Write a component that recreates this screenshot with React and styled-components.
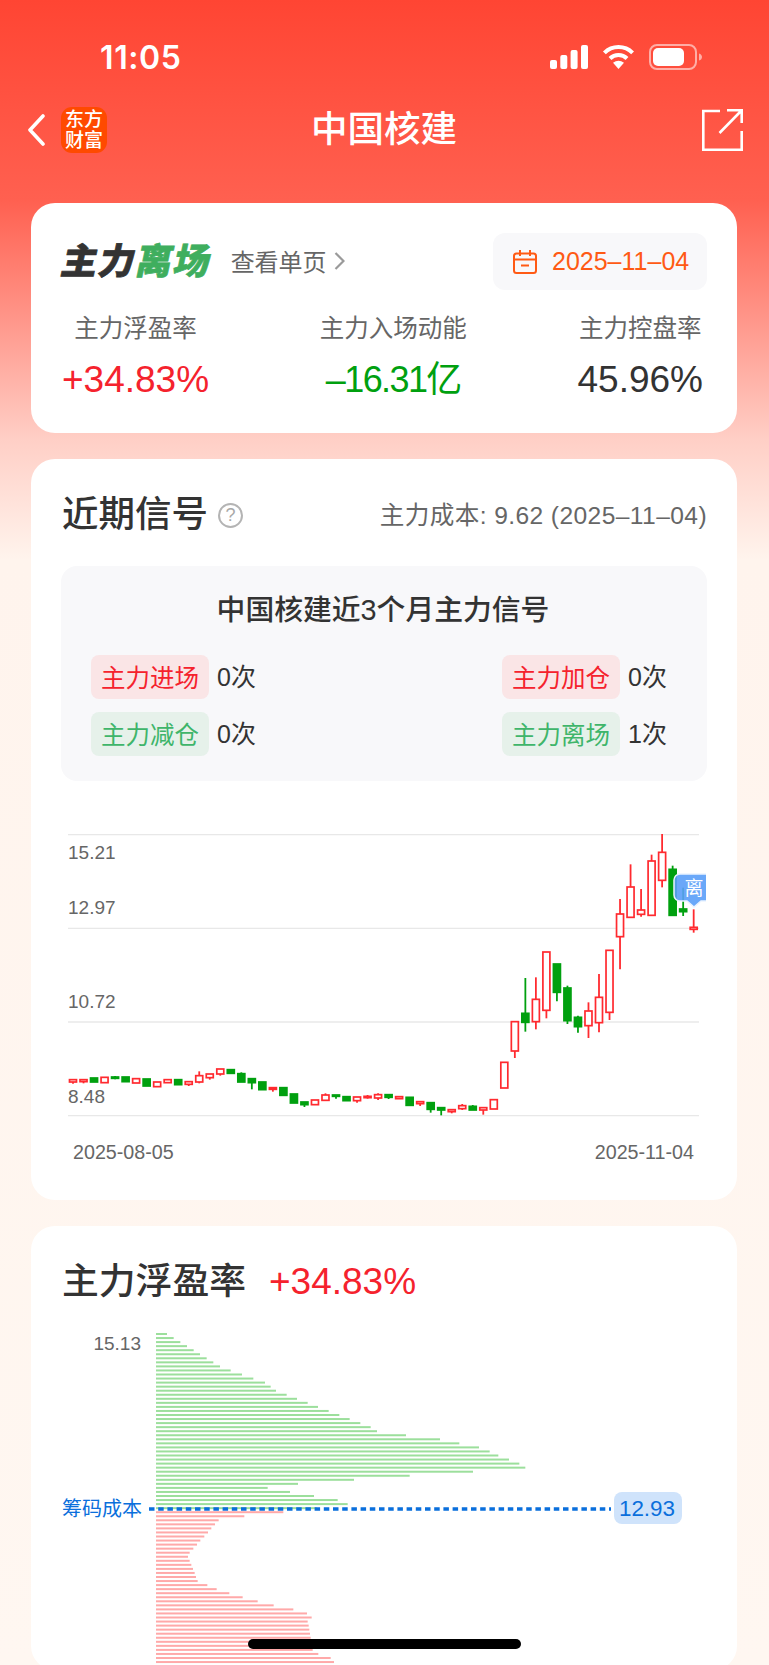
import React from "react";
import styled, { createGlobalStyle } from "styled-components";

const FONT = `"Liberation Sans", "Noto Sans CJK SC", sans-serif`;
const RED = "#f5222d";
const GREEN = "#00a00f";
const UP = "#ff2a2f";
const BLUE = "#0a6fdc";

const GlobalStyle = createGlobalStyle`
  html, body {
    margin: 0;
    padding: 0;
    background: #fff7f1;
  }
  * {
    box-sizing: border-box;
  }
`;

const Page = styled.div`
  position: relative;
  width: 769px;
  height: 1665px;
  overflow: hidden;
  font-family: ${FONT};
  background: linear-gradient(
    180deg,
    #ff4533 0,
    #ff6050 200px,
    #ff8d80 300px,
    #ffcfc6 440px,
    #fff4ed 560px,
    #fff7f1 100%
  );
`;

const StatusBar = styled.div`
  display: flex;
  align-items: center;
  justify-content: space-between;
  height: 58px;
  padding: 28px 66px 0 100px;
  box-sizing: content-box;
  color: #fff;
`;

const Time = styled.span`
  font-family: Inter, sans-serif;
  font-size: 32px;
  font-weight: 600;
  letter-spacing: 0.6px;
`;

const StatusIcons = styled.div`
  display: flex;
  align-items: center;
  gap: 14px;
`;

const NavBar = styled.div`
  position: relative;
  display: flex;
  align-items: center;
  justify-content: space-between;
  height: 60px;
  margin-top: 14px;
  padding: 0 26px 0 28px;
`;

const NavLeft = styled.div`
  display: flex;
  align-items: center;
  gap: 16px;
`;

const AppLogo = styled.div`
  width: 46px;
  height: 46px;
  padding-top: 2px;
  border-radius: 11px;
  background: #ff4a00;
  color: #fff;
  font-size: 19px;
  font-weight: 500;
  line-height: 21px;
  text-align: center;
`;

const NavTitle = styled.div`
  position: absolute;
  left: 0;
  right: 0;
  top: 7px;
  padding-right: 1px;
  text-align: center;
  color: #fff;
  font-size: 36.5px;
  font-weight: 500;
  line-height: 46px;
  pointer-events: none;
`;

const Cards = styled.div`
  display: flex;
  flex-direction: column;
  gap: 26px;
  width: 706px;
  margin: 43px 0 0 31px;
`;

const Card = styled.section`
  background: #fff;
  border-radius: 24px;
  padding: ${(p) => p.$padding || "30px 31px 0"};
`;

const SummaryTop = styled.div`
  display: flex;
  align-items: center;
  justify-content: space-between;
  height: 57px;
`;

const SummaryTitle = styled.div`
  display: flex;
  align-items: center;
  gap: 19px;
`;

const SignalName = styled.div`
  display: inline-block;
  transform: skewX(-12deg);
  font-size: 36px;
  font-weight: 900;
  line-height: 44px;
  letter-spacing: 1.4px;
  color: #333;
  -webkit-text-stroke: 0.7px currentColor;
`;

const SignalAccent = styled.span`
  color: #3fae5e;
`;

const SinglePage = styled.div`
  display: flex;
  align-items: center;
  gap: 7px;
  margin-top: -2px;
  font-size: 24px;
  color: #666;
`;

const DateButton = styled.div`
  display: flex;
  align-items: center;
  gap: 15px;
  width: 214px;
  height: 57px;
  margin-right: -1px;
  padding-left: 20px;
  border-radius: 12px;
  background: #f8f8fa;
  color: #ff5a14;
  font-size: 25px;
`;

const Stats = styled.div`
  display: flex;
  justify-content: space-between;
  margin: 24px 3px 0 0;
  padding-bottom: 31px;
`;

const Stat = styled.div`
  display: flex;
  flex-direction: column;
  align-items: center;
`;

const StatLabel = styled.div`
  color: #666;
  font-size: 24.5px;
  line-height: 30px;
`;

const StatValue = styled.div`
  margin-top: 14px;
  color: ${(p) => p.$color};
  font-size: ${(p) => p.$size || 37}px;
  letter-spacing: ${(p) => p.$tracking || 0}px;
  line-height: 44px;
`;

const SectionHeader = styled.div`
  display: flex;
  align-items: center;
  justify-content: space-between;
  height: 52px;
`;

const SectionLeft = styled.div`
  display: flex;
  align-items: center;
  gap: 10px;
`;

const SectionTitle = styled.h2`
  margin: 0;
  color: #333;
  font-size: 36.5px;
  font-weight: 500;
  line-height: 50px;
`;

const HelpIcon = styled.span`
  display: flex;
  align-items: center;
  justify-content: center;
  width: 25px;
  height: 25px;
  border: 2px solid #b4b4b4;
  border-radius: 50%;
  color: #a8a8a8;
  font-size: 18px;
`;

const CostNote = styled.div`
  margin: 0 -1px 5px 0;
  color: #666;
  font-size: 24.6px;
  letter-spacing: 0.4px;
  white-space: nowrap;
`;

const SignalBox = styled.div`
  margin: 25px -1px 0 -1px;
  padding: 26px 30px 25px;
  border-radius: 16px;
  background: #f8f8fa;
`;

const SignalHeading = styled.div`
  margin-left: -2px;
  color: #333;
  font-size: 28.8px;
  font-weight: 500;
  line-height: 36px;
  text-align: center;
`;

const SignalGrid = styled.div`
  display: grid;
  grid-template-columns: 411px auto;
  row-gap: 13px;
  margin-top: 27px;
`;

const SignalItem = styled.div`
  display: flex;
  align-items: center;
  gap: 8px;
  color: #333;
  font-size: 25px;
`;

const SignalTag = styled.span`
  width: 118px;
  height: 44px;
  border-radius: 8px;
  background: ${(p) => (p.$up ? "#fae5e6" : "#e6f1ea")};
  color: ${(p) => (p.$up ? RED : "#3fb56a")};
  font-size: 24.5px;
  line-height: 47px;
  text-align: center;
`;

const SignalCount = styled.span`
  margin-top: -4px;
`;

const ChartWrap = styled.div`
  margin: 0 -31px;
  padding-bottom: 20px;
`;

const ChartSvg = styled.svg`
  display: block;
  width: 706px;
  margin-top: ${(p) => p.$top}px;
`;

const AxisText = styled.text`
  font-family: ${FONT};
  font-size: ${(p) => p.$size || 19}px;
  fill: ${(p) => p.$fill || "#666"};
`;

const ProfitHeader = styled.div`
  display: flex;
  align-items: center;
  gap: 23px;
  margin-left: 31px;
`;

const ProfitTitle = styled(SectionTitle)`
  font-size: 36.8px;
`;

const ProfitValue = styled.span`
  color: ${RED};
  font-size: 37px;
`;

const HomeIndicator = styled.div`
  position: absolute;
  left: 248px;
  top: 1639px;
  width: 273px;
  height: 10px;
  border-radius: 5px;
  background: #000;
`;

// [up, bodyTop, bodyBottom, wickTop, wickBottom], in thirds of a pixel below the chart top
const CANDLES = [
  [1, 779, 786, 779, 791], [1, 779, 785, 779, 790], [0, 774, 786], [1, 772, 788],
  [0, 771, 775, 768, 778], [0, 771, 785], [1, 776, 789], [0, 777, 798],
  [1, 786, 800], [1, 779, 788], [0, 779, 794], [1, 785, 793, 785, 798],
  [1, 767, 786, 754, 790], [1, 762, 773, 762, 779], [1, 747, 762, 747, 767], [0, 749, 760],
  [0, 761, 786, 757, 786], [0, 776, 788, 776, 808], [0, 786, 809], [1, 803, 808, 803, 815],
  [0, 803, 826], [0, 822, 849], [0, 846, 854, 846, 861], [1, 840, 854],
  [1, 825, 841, 820, 841], [0, 825, 829, 825, 836], [0, 830, 842], [1, 831, 842, 831, 848],
  [1, 829, 833, 825, 836], [1, 824, 834, 820, 840], [0, 824, 832, 824, 837], [1, 830, 836],
  [0, 832, 856], [1, 845, 851, 845, 858], [0, 848, 868, 848, 878], [0, 863, 870, 863, 886],
  [1, 869, 875, 869, 880], [1, 857, 866, 852, 870], [0, 859, 870, 855, 870], [1, 863, 870, 863, 884],
  [1, 839, 867], [1, 727, 804], [1, 605, 693, 605, 714], [0, 580, 607, 474, 635],
  [1, 538, 605, 472, 628], [1, 396, 571, 396, 595], [0, 432, 517, 432, 544], [0, 504, 602, 497, 612],
  [0, 592, 620, 587, 638], [1, 573, 617, 547, 654], [1, 532, 608, 462, 637], [1, 391, 577, 391, 600],
  [1, 282, 350, 237, 448], [1, 201, 292, 133, 292], [1, 270, 283, 207, 290], [1, 123, 286, 104, 286],
  [1, 97, 181, 42, 202], [0, 148, 286, 137, 286], [0, 267, 275, 203, 288], [1, 322, 328, 268, 338],
];

const GREEN_BARS = [
  351, 371, 391, 411, 431, 450, 470, 490, 510, 542, 576, 610, 645, 662, 678, 710, 741, 773, 804, 836, 868, 899,
  931, 962, 981, 1068, 1170, 1228, 1287, 1319, 1345, 1377, 1408, 1426, 1269, 1079, 912, 744, 653, 720, 792, 863,
  893, 800,
];

const RED_BARS = [
  700, 583, 506, 495, 484, 474, 463, 451, 441, 430, 419, 414, 419, 424, 429, 434, 438, 443, 472, 500, 538, 578, 623,
  671, 730, 771, 785, 773, 776, 778, 780, 782, 784, 786, 788, 805, 842, 852,
];

const GRID_LINES = [834.7, 928.3, 1022, 1115.7];

const Candle = ({ data, index }) => {
  const [up, bodyTop, bodyBottom, wickTop = bodyTop, wickBottom = bodyBottom] = data;
  const x = 73 + index * 10.52;
  const color = up ? UP : GREEN;
  const top = 820 + bodyTop / 3;
  const height = (bodyBottom - bodyTop) / 3;
  return (
    <g>
      <line x1={x} x2={x} y1={820 + wickTop / 3} y2={820 + wickBottom / 3} stroke={color} strokeWidth="1.8" />
      <rect
        x={x - 3.5}
        y={top}
        width="7"
        height={height}
        fill={up ? "#fff" : color}
        stroke={color}
        strokeWidth="1.7"
      />
    </g>
  );
};

const KLineChart = () => (
  <ChartSvg $top={39} viewBox="31 820 706 360" height="360">
    {GRID_LINES.map((y) => (
      <line key={y} x1="68" x2="699" y1={y} y2={y} stroke="#e8e8e8" strokeWidth="1.3" />
    ))}
    <AxisText x="68" y="859">15.21</AxisText>
    <AxisText x="68" y="914">12.97</AxisText>
    <AxisText x="68" y="1008">10.72</AxisText>
    <AxisText x="68" y="1103">8.48</AxisText>
    <AxisText x="73" y="1159" $size={19.7}>2025-08-05</AxisText>
    <AxisText x="694" y="1159" textAnchor="end" $size={19.7}>2025-11-04</AxisText>
    {CANDLES.map((c, i) => (
      <Candle key={i} data={c} index={i} />
    ))}
    <path
      d="M706 874H680a6 6 0 0 0-6 6v15a6 6 0 0 0 6 6h7l7 6 7-6h5"
      fill="#5a9ff8"
      fillOpacity="0.9"
      stroke="#eaf3ff"
      strokeWidth="1.5"
    />
    <AxisText x="694" y="895" textAnchor="middle" $size={19} $fill="#fff">离</AxisText>
  </ChartSvg>
);

const DistributionChart = () => (
  <ChartSvg $top={13} viewBox="31 1320 706 350" height="350">
    {GREEN_BARS.map((end, i) => (
      <rect key={i} x="156" y={1333 + i * 4.05} width={(end - 318) / 3} height="2" fill="#9cdf9c" />
    ))}
    {RED_BARS.map((end, i) => (
      <rect key={i} x="156" y={1511.2 + i * 4.05} width={(end - 318) / 3} height="2" fill="#ffa9a9" />
    ))}
    <AxisText x="141" y="1350" textAnchor="end">15.13</AxisText>
    <AxisText x="62" y="1516" $size={20} $fill={BLUE}>筹码成本</AxisText>
    <line x1="149" x2="611" y1="1509" y2="1509" stroke={BLUE} strokeWidth="3.3" strokeDasharray="5.5 3.7" />
    <rect x="614" y="1492" width="68" height="32" rx="8" fill="#cfe3fb" />
    <AxisText x="647" y="1516" textAnchor="middle" $size={22.4} $fill={BLUE}>12.93</AxisText>
  </ChartSvg>
);

const SignalIcon = () => (
  <svg width="38" height="24" viewBox="0 0 38 24" fill="#fff">
    <rect x="0" y="15" width="7" height="9" rx="2" />
    <rect x="10.3" y="10" width="7" height="14" rx="2" />
    <rect x="20.6" y="5" width="7" height="19" rx="2" />
    <rect x="31" y="0" width="7" height="24" rx="2" />
  </svg>
);

const WifiIcon = () => (
  <svg width="33" height="24" viewBox="0 0 33 24" fill="none" stroke="#fff">
    <path d="M2.4 7.9a20 20 0 0 1 28.2 0" strokeWidth="4" />
    <path d="M8 13.5a12 12 0 0 1 17 0" strokeWidth="4" />
    <path d="M16.5 24L11 17.8Q16.5 13.5 22 17.8Z" fill="#fff" stroke="none" />
  </svg>
);

const BatteryIcon = () => (
  <svg width="54" height="26" viewBox="0 0 54 26" fill="none">
    <rect x="1" y="1" width="46" height="24" rx="7" stroke="#fff" strokeOpacity="0.55" strokeWidth="2" />
    <rect x="4" y="4" width="31" height="18" rx="5" fill="#fff" />
    <path d="M50 9.5c2 .5 3 2 3 3.5s-1 3-3 3.5z" fill="#fff" fillOpacity="0.55" />
  </svg>
);

const BackIcon = () => (
  <svg width="17" height="32" viewBox="0 0 17 32" fill="none" stroke="#fff" strokeWidth="3.6" strokeLinecap="round" strokeLinejoin="round">
    <path d="M15 2L2 16l13 14" />
  </svg>
);

const ShareIcon = () => (
  <svg width="41" height="42" viewBox="0 0 41 42" fill="none" stroke="#fff" strokeWidth="2.6">
    <path d="M18 2H1.3v38.7h38.4V22" />
    <path d="M17.5 24L39.5 1.5M25 1.3h14.7V14" />
  </svg>
);

const CalendarIcon = () => (
  <svg width="24" height="24" viewBox="0 0 24 24" fill="none" stroke="#ff5a14" strokeWidth="2">
    <rect x="1" y="3.5" width="22" height="19.5" rx="2.5" />
    <path d="M7 0v6M17 0v6M1 9.5h22M8 15.5h8" />
  </svg>
);

const ChevronIcon = () => (
  <svg width="11" height="18" viewBox="0 0 11 18" fill="none" stroke="#9a9a9a" strokeWidth="2.2">
    <path d="M1.5 1l8 8-8 8" />
  </svg>
);

const SIGNALS = [
  { label: "主力进场", count: "0次", up: true },
  { label: "主力加仓", count: "0次", up: true },
  { label: "主力减仓", count: "0次", up: false },
  { label: "主力离场", count: "1次", up: false },
];

const App = () => (
  <Page>
    <GlobalStyle />
    <StatusBar>
      <Time>11:05</Time>
      <StatusIcons>
        <SignalIcon />
        <WifiIcon />
        <BatteryIcon />
      </StatusIcons>
    </StatusBar>
    <NavBar>
      <NavLeft>
        <BackIcon />
        <AppLogo>
          东方
          <br />
          财富
        </AppLogo>
      </NavLeft>
      <NavTitle>中国核建</NavTitle>
      <ShareIcon />
    </NavBar>
    <Cards>
      <Card>
        <SummaryTop>
          <SummaryTitle>
            <SignalName>
              主力<SignalAccent>离场</SignalAccent>
            </SignalName>
            <SinglePage>
              查看单页
              <ChevronIcon />
            </SinglePage>
          </SummaryTitle>
          <DateButton>
            <CalendarIcon />
            2025–11–04
          </DateButton>
        </SummaryTop>
        <Stats>
          <Stat>
            <StatLabel>主力浮盈率</StatLabel>
            <StatValue $color={RED}>+34.83%</StatValue>
          </Stat>
          <Stat>
            <StatLabel>主力入场动能</StatLabel>
            <StatValue $color={GREEN} $size={36} $tracking={-1.6}>
              –16.31亿
            </StatValue>
          </Stat>
          <Stat>
            <StatLabel>主力控盘率</StatLabel>
            <StatValue $color="#333">45.96%</StatValue>
          </Stat>
        </Stats>
      </Card>
      <Card>
        <SectionHeader>
          <SectionLeft>
            <SectionTitle>近期信号</SectionTitle>
            <HelpIcon>?</HelpIcon>
          </SectionLeft>
          <CostNote>主力成本: 9.62 (2025–11–04)</CostNote>
        </SectionHeader>
        <SignalBox>
          <SignalHeading>中国核建近3个月主力信号</SignalHeading>
          <SignalGrid>
            {SIGNALS.map((s) => (
              <SignalItem key={s.label}>
                <SignalTag $up={s.up}>{s.label}</SignalTag>
                <SignalCount>{s.count}</SignalCount>
              </SignalItem>
            ))}
          </SignalGrid>
        </SignalBox>
        <ChartWrap>
          <KLineChart />
        </ChartWrap>
      </Card>
      <Card $padding="31px 0 0">
        <ProfitHeader>
          <ProfitTitle>主力浮盈率</ProfitTitle>
          <ProfitValue>+34.83%</ProfitValue>
        </ProfitHeader>
        <DistributionChart />
      </Card>
    </Cards>
    <HomeIndicator />
  </Page>
);

export default App;
